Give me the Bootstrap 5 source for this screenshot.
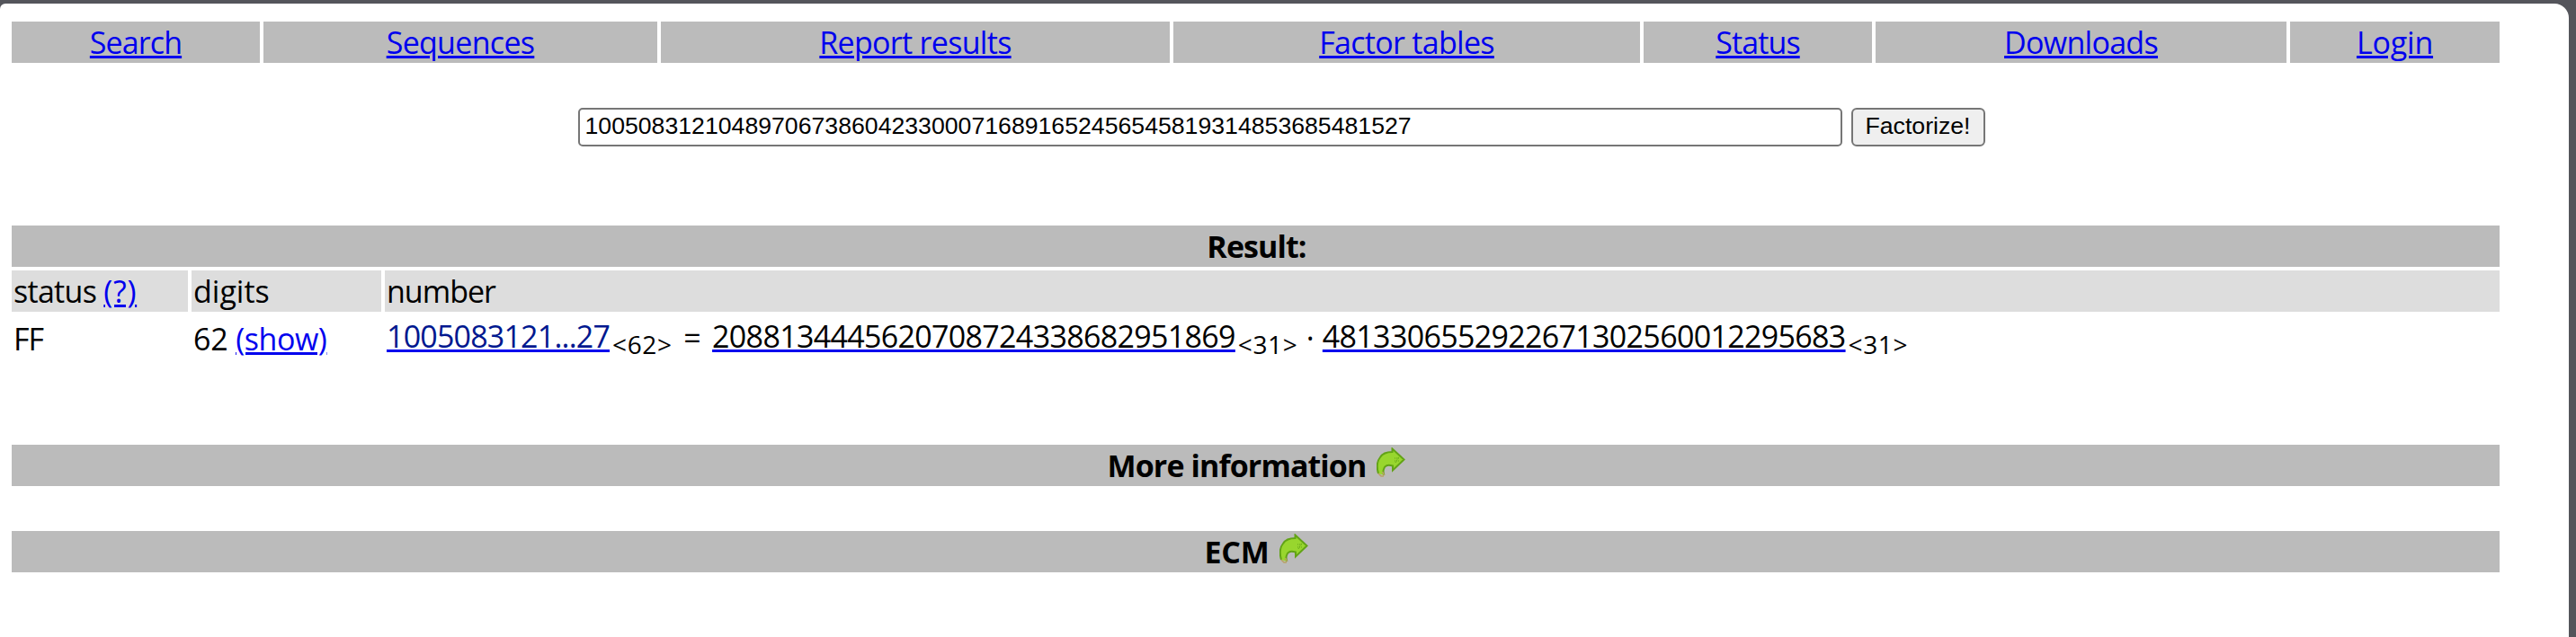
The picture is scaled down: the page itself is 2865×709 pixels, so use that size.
<!DOCTYPE html>
<html lang="en">
<head>
<meta charset="utf-8">
<title>factordb.com</title>
<link href="https://cdn.jsdelivr.net/npm/bootstrap@5.3.0/dist/css/bootstrap.min.css" rel="stylesheet">
<style>
body{background:#54555b;font-family:"Open Sans","Noto Sans",sans-serif;font-size:34px;line-height:46px;color:#000;overflow:hidden}
.page{width:2857px;height:705px;margin-top:4px;padding:20px 77px 0 13px;background:#fff;border-radius:6px 16px 0 0}
a{color:#00e;text-decoration-line:underline;text-decoration-thickness:3px;text-underline-offset:2px;letter-spacing:-.7px}
.bar{background:#bbb;height:46px;font-weight:700;letter-spacing:-.9px}
.title{padding-left:2px}
.ecm-bar{margin-top:50px}
.menu .bar{font-weight:400}
.head{background:#ddd;height:46px}
.menu{display:grid;grid-template-columns:276px 438px 566px 519px 254px 457px 233px;gap:4px}
.result{display:grid;grid-template-columns:196px 211px 1fr;grid-template-rows:46px 148px;column-gap:4px}
.result>div{padding-left:2px;white-space:pre}
.result>.cell{padding-top:7px}
.result>.factors{padding-top:4px}
.query{margin:50px 0 88px 629.5px;gap:10px;height:43px}
.field{width:1406px;height:43px;border:2px solid #767676;border-radius:5px;padding:0 0 2px 6px;font:26.67px/37px "Liberation Sans",sans-serif;color:#000}
.go{width:149px;height:43px;border:2px solid #767676;border-radius:6px;background:#efefef;padding:0 0 2px;font:26.67px/37px "Liberation Sans",sans-serif;color:#000}
.len{display:inline-block;width:67px;padding-left:3px;font-size:28px;line-height:1;letter-spacing:.6px;position:relative;top:7px}
.op{display:inline-block;width:47px;padding-left:3px;text-align:center;line-height:1;position:relative;top:2px}
.dot{width:30px}
.ls-a{letter-spacing:-.9px}.ls-b{letter-spacing:-.7px}.ls-c{letter-spacing:-.2px}.ls-d{letter-spacing:.7px}.ls-e{letter-spacing:-.43px}.ls-f{letter-spacing:-1px}
.abbr{color:#00188f;text-decoration-color:#00e;letter-spacing:-.8px}
.prime{color:#000;text-decoration-color:#00e;letter-spacing:-.675px}
.ecm{letter-spacing:-.3px}
.arrow{width:32px;height:33px;margin:3px 0 0 12px}
</style>
</head>
<body>
<svg class="d-none"><symbol id="arrow" viewBox="0 0 32 33"><path d="M2 29C0 22 0 16 4 11C7 6 12 5 17.500 5V1.500L30.500 13.500L18 25.500V20.500C12 19 9 20 8 24C7 27 7.500 29 8.500 31" fill="#98d62e" stroke="#62a316" stroke-width="2"/><path d="M2 29l3 3h3M8.500 31L6.500 27" fill="none" stroke="#b9a264" stroke-width="1.500"/><path d="M20 12h6M20 15h6M21 17l4-7" stroke="#62a316" stroke-dasharray="1 1" fill="none"/></symbol></svg>
<div class="page">
<nav class="menu text-center">
<div class="bar"><a href="#" class="ls-a">Search</a></div>
<div class="bar"><a href="#">Sequences</a></div>
<div class="bar"><a href="#">Report results</a></div>
<div class="bar"><a href="#">Factor tables</a></div>
<div class="bar"><a href="#" class="ls-a">Status</a></div>
<div class="bar"><a href="#">Downloads</a></div>
<div class="bar"><a href="#" class="ls-c">Login</a></div>
</nav>
<form class="query d-flex"><input class="field" value="10050831210489706738604233000716891652456545819314853685481527"><button type="button" class="go">Factorize!</button></form>
<div class="bar title text-center mb-1"><span>Result:</span></div>
<div class="result">
<div class="head"><span class="ls-b">status </span><a href="#" class="ls-d">(?)</a></div>
<div class="head"><span>digits</span></div>
<div class="head"><span class="ls-f">number</span></div>
<div class="cell"><span class="ls-f">FF</span></div>
<div class="cell"><span class="ls-c">62 </span><a href="#" class="ls-e">(show)</a></div>
<div class="factors"><a href="#" class="abbr">1005083121...27</a><span class="len">&lt;62&gt;</span><span class="op">=</span><a href="#" class="prime">2088134445620708724338682951869</a><span class="len">&lt;31&gt;</span><span class="op dot">·</span><a href="#" class="prime">4813306552922671302560012295683</a><span class="len">&lt;31&gt;</span></div>
</div>
<div class="bar title d-flex justify-content-center"><span>More information</span><svg class="arrow"><use href="#arrow"/></svg></div>
<div class="bar title ecm-bar d-flex justify-content-center"><span class="ecm">ECM</span><svg class="arrow"><use href="#arrow"/></svg></div>
</div>
<script src="https://cdn.jsdelivr.net/npm/bootstrap@5.3.0/dist/js/bootstrap.bundle.min.js"></script>
</body>
</html>
